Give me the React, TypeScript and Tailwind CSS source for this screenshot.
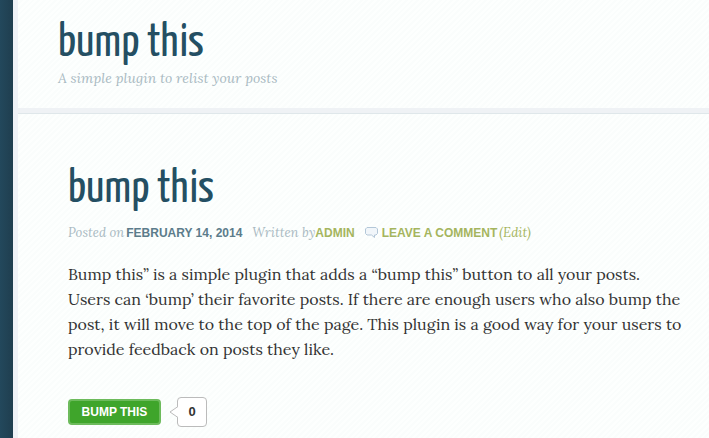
const titleClass =
  'font-["Yanone_Kaffeesatz","Liberation_Sans_Narrow","Liberation_Sans",sans-serif] text-[47px] leading-[54px] font-normal text-[#244f63]';

function SpeechIcon() {
  return (
    <svg className="mr-1 ml-2.5 shrink-0" width="13" height="12" viewBox="0 0 13 12" fill="#f1f6fa" stroke="#b3c7d8" aria-hidden="true">
      <path d="M2 .5h9L12.500 2v4.500L11 8H9.500v2.500L6.500 8H2L.5 6.500V2z" />
    </svg>
  );
}

export default function App() {
  return (
    <div className='flex min-h-screen bg-[#214457] font-["Lora","Liberation_Serif",serif]'>
      <div className="w-[13px] shrink-0 bg-linear-to-r from-[#23485c] to-[#1f3e4f]" />
      <div className="min-w-0 grow border-l-[5px] border-[#eff2f7] bg-[#fcfefd] bg-[repeating-linear-gradient(135deg,#fdfffe_0_2px,#fafdfc_2px_4px)]">
        <header className="border-b-[5px] border-[#eff2f5] px-10 pt-4 pb-[22px]">
          <h1 className={titleClass}>
            <a href="#home">bump this</a>
          </h1>
          <p className="text-sm leading-4 text-[#a9bac2] italic">A simple plugin to relist your posts</p>
        </header>
        <main className="border-t border-[#dfe7ea] pt-12 pr-5 pl-[50px]">
          <article>
            <h2 className={titleClass}>
              <a href="#post">bump this</a>
            </h2>
            <div className="mt-1.5 flex items-center text-[13px] leading-[22px] whitespace-nowrap text-[#a9bac2] italic">
              <span>Posted on</span>
              <a href="#date" className='ml-0.5 font-["Liberation_Sans",sans-serif] text-xs leading-[22px] font-bold text-[#5c7c8b] not-italic'>
                FEBRUARY 14, 2014
              </a>
              <span className="ml-2.5">Written by</span>
              <a href="#admin" className='font-["Liberation_Sans",sans-serif] text-xs leading-[22px] font-bold text-[#a5b55e] not-italic'>
                ADMIN
              </a>
              <SpeechIcon />
              <a href="#comments" className='font-["Liberation_Sans",sans-serif] text-xs leading-[22px] font-bold text-[#a5b55e] not-italic'>
                LEAVE A COMMENT
              </a>
              <a href="#edit" className="ml-0.5 text-[#a5b55e]">(Edit)</a>
            </div>
            <p className="mt-[18px] text-base leading-[25px] text-[#333333]">
              Bump this” is a simple plugin that adds a “bump this” button to all your posts.
              <br />
              Users can ‘bump’ their favorite posts. If there are enough users who also bump the
              <br />
              post, it will move to the top of the page. This plugin is a good way for your users to
              <br />
              provide feedback on posts they like.
            </p>
            <div className='mt-[35px] flex items-center font-["Liberation_Sans",sans-serif] font-bold'>
              <button type="button" className="h-[26px] w-[93px] rounded-sm border-2 border-[#6dbb5c] bg-[#3fa52b] text-xs text-white">
                BUMP THIS
              </button>
              <div className="ml-2 flex items-center">
                <svg className="z-10 -mr-px" width="9" height="12" viewBox="0 0 9 12" fill="#fff" stroke="#bbbbbb" aria-hidden="true">
                  <path d="M9 .5 1 6l8 5.500" />
                </svg>
                <span className="flex h-[30px] w-[30px] items-center justify-center rounded border border-[#bbbbbb] bg-white text-[13px] text-[#333333]">
                  0
                </span>
              </div>
            </div>
          </article>
        </main>
      </div>
    </div>
  );
}
